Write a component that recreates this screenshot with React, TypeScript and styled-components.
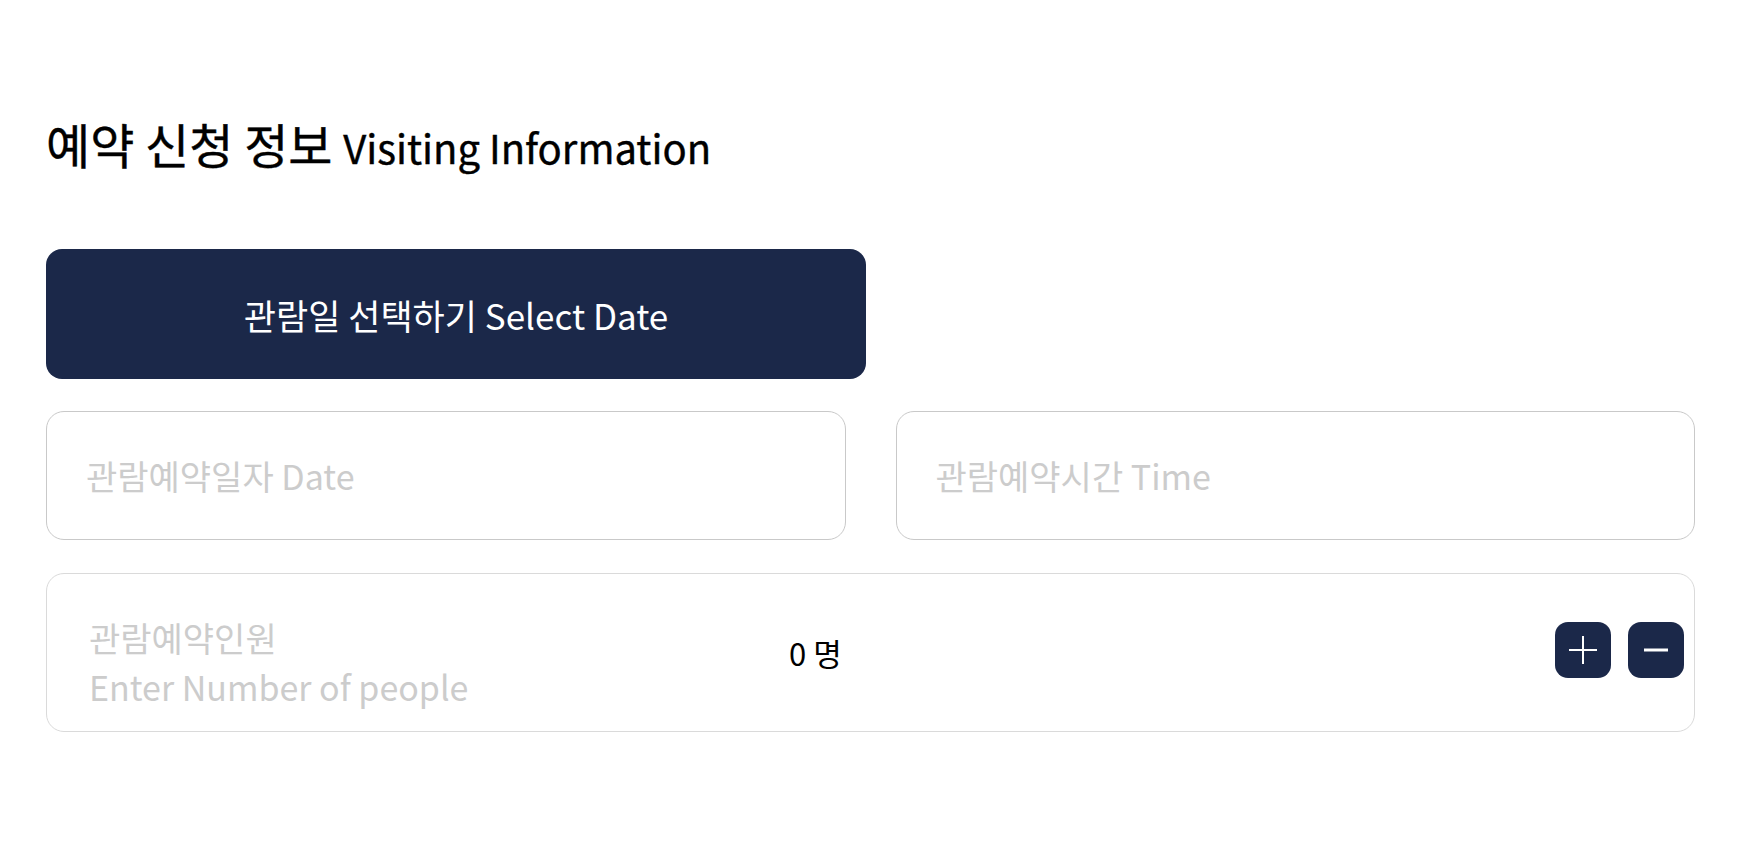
import React from "react";
import styled, { createGlobalStyle } from "styled-components";

const GlobalStyle = createGlobalStyle`
  html, body {
    margin: 0;
    padding: 0;
    background: #ffffff;
  }
  body {
    font-family: "Noto Sans CJK KR", "Noto Sans", sans-serif;
    color: #000;
  }
`;

const Page = styled.div`
  width: 1649px;
  padding: 111px 0 0 46px;
  display: flex;
  flex-direction: column;
`;

const Title = styled.h2`
  margin: 0;
  height: 64px;
  font-size: 48px;
  line-height: 64px;
  font-weight: 400;
  color: #000;
  -webkit-text-stroke: 0.4px #000;
`;

const TitleEn = styled.span`
  font-size: 40px;
  font-weight: 400;
`;

const SelectButton = styled.button`
  margin-top: 74px;
  width: 820px;
  height: 130px;
  border: none;
  border-radius: 16px;
  background: #1b2849;
  color: #ffffff;
  font-family: "Noto Sans CJK KR", "Noto Sans", sans-serif;
  font-size: 35px;
  font-weight: 400;
  cursor: pointer;
`;

const FieldRow = styled.div`
  margin-top: 32px;
  display: grid;
  grid-template-columns: 1fr 1fr;
  gap: 50px;
`;

const Field = styled.div`
  box-sizing: border-box;
  height: 129px;
  border: 1.5px solid #c9c9c9;
  border-radius: 18px;
  display: flex;
  align-items: center;
  padding-left: 39px;
`;

const Placeholder = styled.span`
  font-size: 34px;
  color: #cccccc;
`;

const PeopleBox = styled.div`
  box-sizing: border-box;
  margin-top: 33px;
  height: 159px;
  border: 1.5px solid #dadada;
  border-radius: 18px;
  display: flex;
  align-items: center;
  padding: 0 10px 0 42px;
`;

const PeopleLabel = styled.div`
  width: 700px;
  display: flex;
  flex-direction: column;
  font-size: 34px;
  line-height: 49px;
  color: #cccccc;
  padding-top: 18px;
`;

const Count = styled.div`
  flex: 1;
  font-size: 31px;
  color: #000;
`;

const Steppers = styled.div`
  display: flex;
  gap: 17px;
  margin-top: -6px;
`;

const StepButton = styled.button`
  width: 56px;
  height: 56px;
  border: none;
  border-radius: 13px;
  background: #1b2849;
  display: flex;
  align-items: center;
  justify-content: center;
  padding: 0;
  cursor: pointer;
`;

const PlusIcon = () => (
  <svg width="30" height="30" viewBox="0 0 30 30">
    <path d="M15 1 V29 M1 15 H29" stroke="#fff" strokeWidth="2" />
  </svg>
);

const MinusIcon = () => (
  <svg width="26" height="26" viewBox="0 0 26 26">
    <path d="M1 13 H25" stroke="#fff" strokeWidth="3" />
  </svg>
);

export default function App() {
  return (
    <>
      <GlobalStyle />
      <Page>
        <Title>
          예약 신청 정보 <TitleEn>Visiting Information</TitleEn>
        </Title>
        <SelectButton>관람일 선택하기 Select Date</SelectButton>
        <FieldRow>
          <Field>
            <Placeholder>관람예약일자 Date</Placeholder>
          </Field>
          <Field>
            <Placeholder>관람예약시간 Time</Placeholder>
          </Field>
        </FieldRow>
        <PeopleBox>
          <PeopleLabel>
            <span>관람예약인원</span>
            <span>Enter Number of people</span>
          </PeopleLabel>
          <Count>0 명</Count>
          <Steppers>
            <StepButton aria-label="increase">
              <PlusIcon />
            </StepButton>
            <StepButton aria-label="decrease">
              <MinusIcon />
            </StepButton>
          </Steppers>
        </PeopleBox>
      </Page>
    </>
  );
}
